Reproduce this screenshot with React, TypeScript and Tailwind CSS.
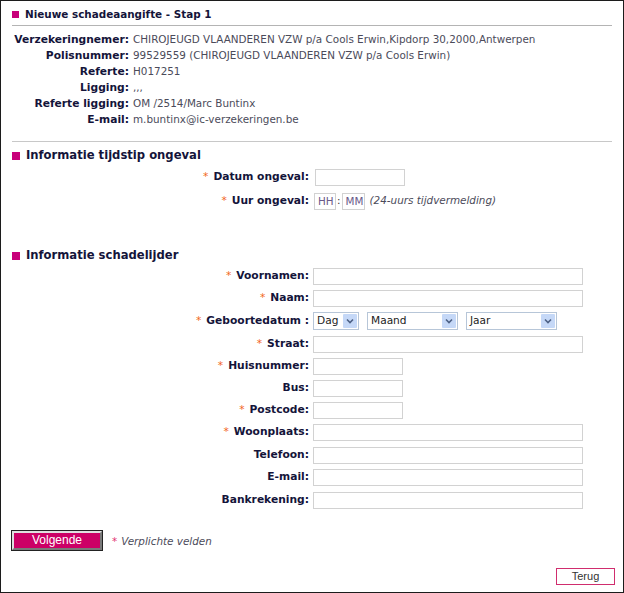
import { ReactNode } from "react";

const info = [
  ["Verzekeringnemer:", "CHIROJEUGD VLAANDEREN VZW p/a Cools Erwin,Kipdorp 30,2000,Antwerpen"],
  ["Polisnummer:", "99529559 (CHIROJEUGD VLAANDEREN VZW p/a Cools Erwin)"],
  ["Referte:", "H017251"],
  ["Ligging:", ",,,"],
  ["Referte ligging:", "OM /2514/Marc Buntinx"],
  ["E-mail:", "m.buntinx@ic-verzekeringen.be"],
];

function Star() {
  return <span className="mr-[5px] text-[#f26522] font-normal">*</span>;
}

function Square({ big }: { big?: boolean }) {
  return <span className={`inline-block bg-[#c8007a] ${big ? "h-[8px] w-[8px]" : "h-[7px] w-[7px]"}`} />;
}

function TextBox({ width, placeholder }: { width: number; placeholder?: string }) {
  return (
    <div
      className="h-[17px] border border-[#d2d2d2] bg-white px-[3px] text-[10.4px] leading-[15px] text-[#6a5a8a]"
      style={{ width }}
    >
      {placeholder}
    </div>
  );
}

function Select({ width, label }: { width: number; label: string }) {
  return (
    <div
      className="flex h-[18px] items-center border border-[#b7c6d8] bg-white pl-[3px] pr-[1px]"
      style={{ width }}
    >
      <span className="flex-1 text-[10.6px] text-[#222]">{label}</span>
      <span className="flex h-[14px] w-[14px] items-center justify-center rounded-[1px] bg-[#c5d8f7]">
        <svg width="8" height="6" viewBox="0 0 8 6">
          <path d="M1 1.5 L4 4.5 L7 1.5" fill="none" stroke="#4d6185" strokeWidth="1.6" />
        </svg>
      </span>
    </div>
  );
}

function FormRow({ label, req, h, children }: { label: string; req?: boolean; h: number; children: ReactNode }) {
  return (
    <div className="flex items-center" style={{ height: h }}>
      <div className="w-[297px] text-right text-[10.7px] font-bold text-[#14143a]">
        {req && <Star />}
        {label}
      </div>
      <div className="ml-[4px] flex items-center">{children}</div>
    </div>
  );
}

export default function App() {
  return (
    <div className="relative h-[593px] w-[624px] border border-[#1c1c1c] bg-white px-[11px] font-['DejaVu_Sans',Verdana,sans-serif] text-[10.4px] text-[#4a4a4a]">
      <div className="flex h-[24px] items-center gap-[6px] pt-[3px]">
        <Square />
        <span className="text-[10.4px] font-bold text-[#14143a]">Nieuwe schadeaangifte - Stap 1</span>
      </div>
      <div className="border-t border-[#b4b4b4]" />

      <div className="mt-[6px] flex flex-col">
        {info.map(([l, v]) => (
          <div key={l} className="flex h-[16px] items-center">
            <span className="w-[117px] text-right text-[10.7px] font-bold text-[#14143a]">{l}</span>
            <span className="ml-[4px] whitespace-nowrap text-[#4b4b5a]">{v}</span>
          </div>
        ))}
      </div>

      <div className="mt-[13px] border-t border-[#c8c8c8]" />

      <div className="mt-[6px] flex h-[16px] items-center gap-[6px]">
        <Square big />
        <span className="text-[11.6px] font-bold text-[#14143a]">Informatie tijdstip ongeval</span>
      </div>

      <div className="mt-[1px]">
        <div className="flex h-[24px] items-center">
          <div className="w-[297px] text-right text-[10.7px] font-bold text-[#14143a]">
            <Star />
            Datum ongeval:
          </div>
          <div className="ml-[6px]">
            <TextBox width={90} />
          </div>
        </div>
        <div className="flex h-[24px] items-center">
          <div className="w-[297px] text-right text-[10.7px] font-bold text-[#14143a]">
            <Star />
            Uur ongeval:
          </div>
          <div className="ml-[5px] flex items-center">
            <TextBox width={22} placeholder="HH" />
            <span className="mx-[1px] text-[#333]">:</span>
            <TextBox width={23} placeholder="MM" />
            <span className="ml-[5px] italic text-[#4b4b5a]">(24-uurs tijdvermelding)</span>
          </div>
        </div>
      </div>

      <div className="mt-[35px] flex h-[16px] items-center gap-[6px]">
        <Square big />
        <span className="text-[11.6px] font-bold text-[#14143a]">Informatie schadelijder</span>
      </div>

      <div className="mt-[1px]">
        <FormRow label="Voornamen:" req h={22}>
          <TextBox width={270} />
        </FormRow>
        <FormRow label="Naam:" req h={22}>
          <TextBox width={270} />
        </FormRow>
        <FormRow label="Geboortedatum :" req h={24}>
          <div className="flex gap-[8px]">
            <Select width={46} label="Dag" />
            <Select width={91} label="Maand" />
            <Select width={91} label="Jaar" />
          </div>
        </FormRow>
        <FormRow label="Straat:" req h={22}>
          <TextBox width={270} />
        </FormRow>
        <FormRow label="Huisnummer:" req h={22}>
          <TextBox width={90} />
        </FormRow>
        <FormRow label="Bus:" h={22}>
          <TextBox width={90} />
        </FormRow>
        <FormRow label="Postcode:" req h={22}>
          <TextBox width={90} />
        </FormRow>
        <FormRow label="Woonplaats:" req h={23}>
          <TextBox width={270} />
        </FormRow>
        <FormRow label="Telefoon:" h={22}>
          <TextBox width={270} />
        </FormRow>
        <FormRow label="E-mail:" h={23}>
          <TextBox width={270} />
        </FormRow>
        <FormRow label="Bankrekening:" h={22}>
          <TextBox width={270} />
        </FormRow>
      </div>

      <div className="mt-[20px] flex items-center">
        <button className="h-[19px] w-[90px] border-2 border-[#7a7a7a] border-t-[#e0e0e0] border-l-[#e0e0e0] bg-[#cc0066] font-['Liberation_Sans',Arial,sans-serif] text-[12px] leading-[15px] text-white outline outline-1 outline-[#222]">
          Volgende
        </button>
        <span className="ml-[10px] mt-[2px] italic text-[#4b4b5a]">
          <span className="mr-[4px] not-italic text-[#e2336f]">*</span>
          Verplichte velden
        </span>
      </div>

      <div className="mt-[18px] flex justify-end">
        <button className="mr-[-3px] h-[17px] w-[59px] border border-[#d02d6e] bg-white font-['Liberation_Sans',Arial,sans-serif] text-[11px] leading-[15px] text-[#333]">
          Terug
        </button>
      </div>
    </div>
  );
}
